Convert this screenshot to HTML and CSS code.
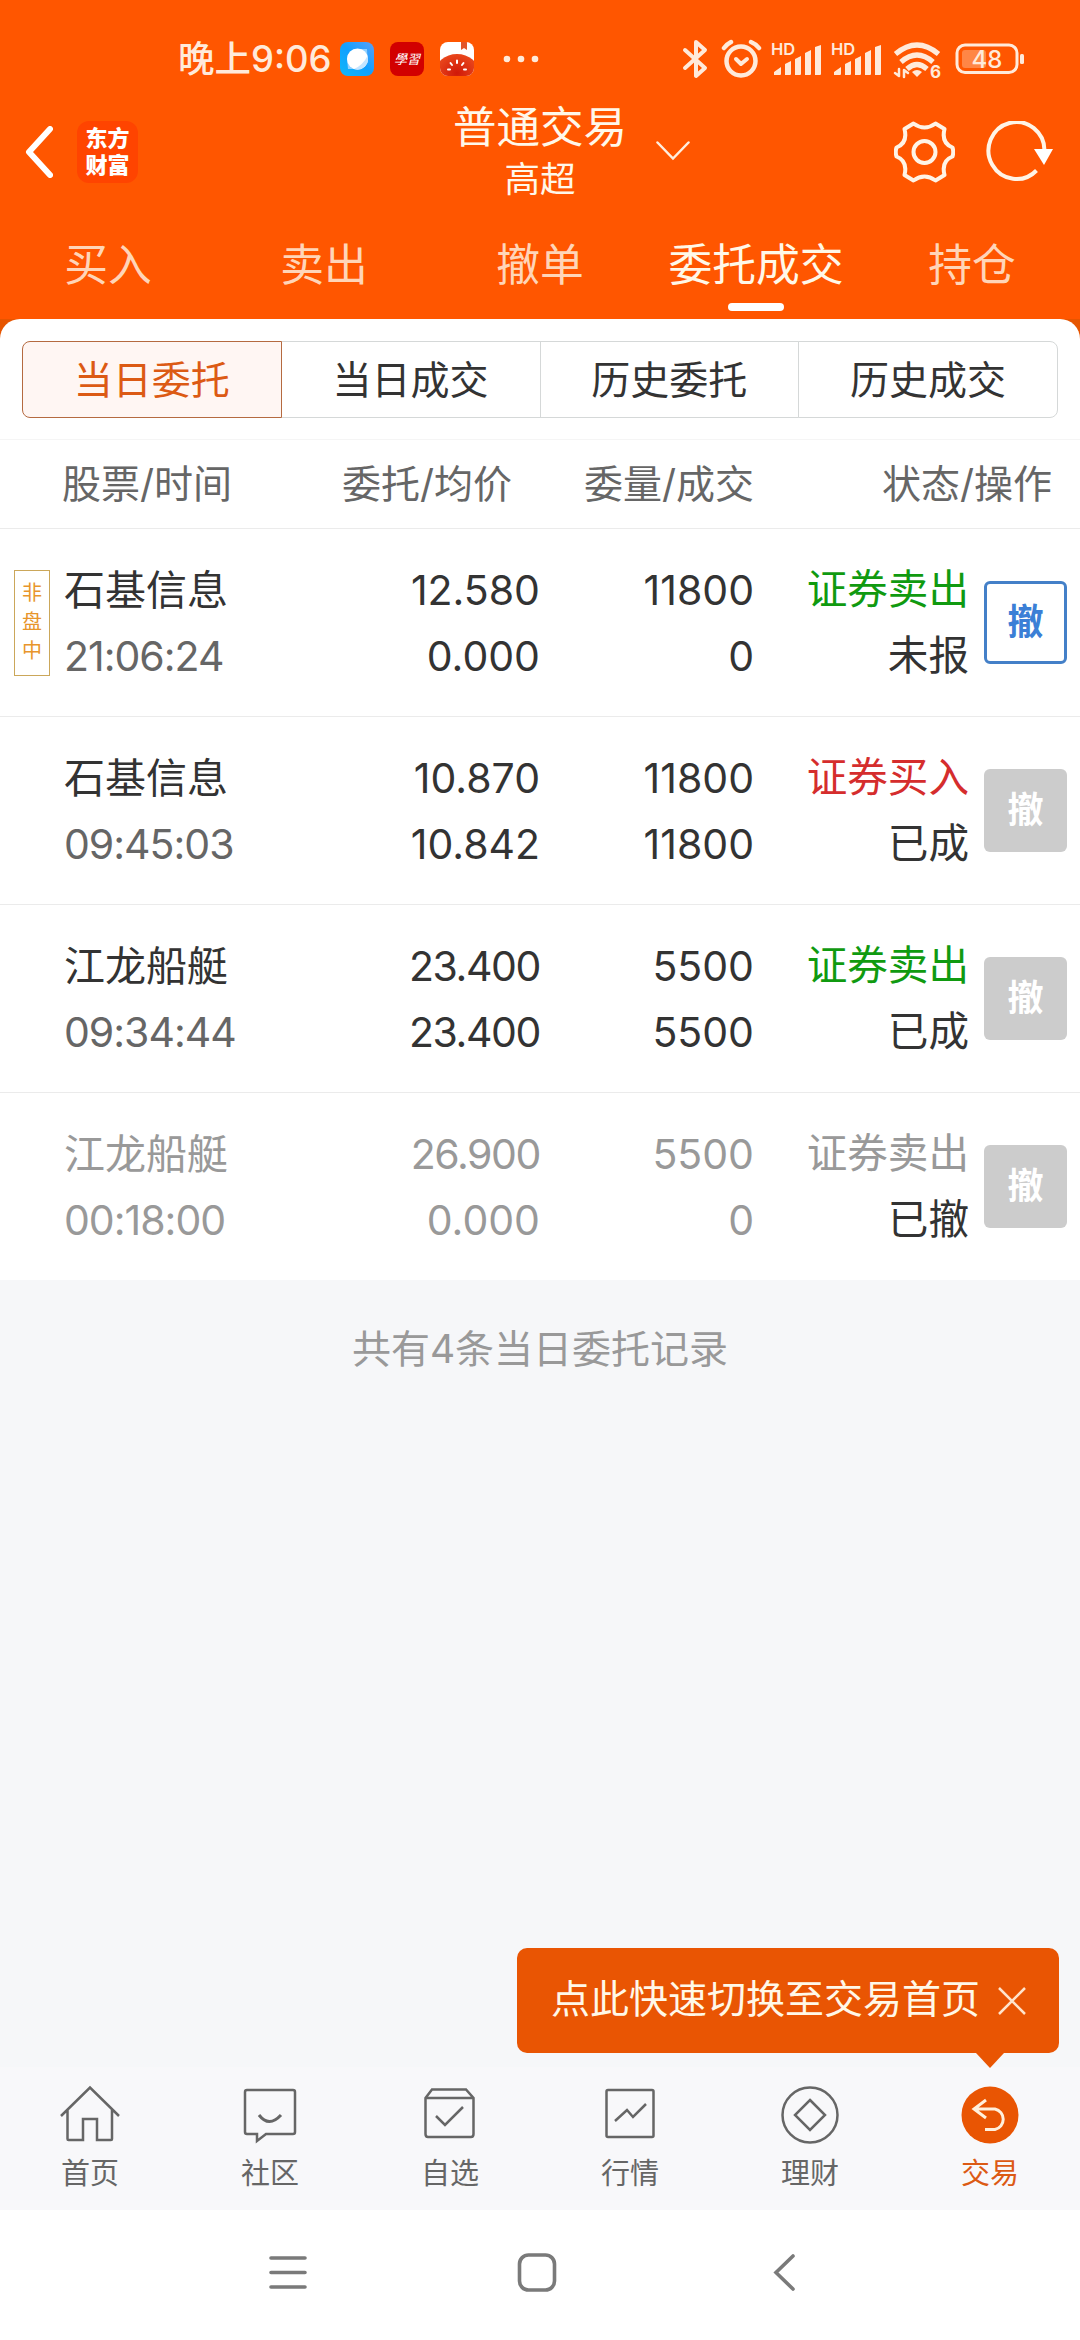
FILE: index.html
```
<!DOCTYPE html>
<html lang="zh-CN">
<head>
  <meta charset="UTF-8">
  <meta name="viewport" content="width=device-width, initial-scale=1.0">
  <title>普通交易</title>
  <link rel="stylesheet" href="styles.css">
</head>
<body>
  <div class="app">
    <header class="top">
      <div class="status-bar">
        <div class="status-left">
          <span class="clock">晚上9:06</span>
          <svg class="app-icon" viewBox="0 0 34 34">
            <defs>
              <linearGradient id="blue" x1="0" y1="1" x2="1" y2="0">
                <stop offset="0" stop-color="#10b8f8"/>
                <stop offset="0.5" stop-color="#10a0ff"/>
                <stop offset="1" stop-color="#5aa0f8"/>
              </linearGradient>
            </defs>
            <rect width="34" height="34" rx="8" fill="url(#blue)"/>
            <path d="M8 27 L7 17 A10 10 0 0 1 17 7 L27 7 L27.500 17 A10 10 0 0 1 17 27 Z" fill="#8fd0ff"/>
            <circle cx="17.500" cy="17" r="10.500" fill="#fff"/>
            <path d="M27.500 14 Q23 23 14 27 A10.500 10.500 0 0 0 27.500 14Z" fill="#c4e4ff"/>
          </svg>
          <span class="app-icon study">學習</span>
          <svg class="app-icon" viewBox="0 0 34 34">
            <defs>
              <clipPath id="round"><rect width="34" height="34" rx="8"/></clipPath>
              <radialGradient id="tomato" cx="0.5" cy="0.5" r="0.6">
                <stop offset="0" stop-color="#d01808"/>
                <stop offset="1" stop-color="#ee5020"/>
              </radialGradient>
            </defs>
            <g clip-path="url(#round)">
              <rect width="34" height="34" fill="#fff"/>
              <path d="M21 0h6v8l-3-2-3 2z" fill="#e2562a"/>
              <ellipse cx="17" cy="31" rx="22" ry="19" fill="url(#tomato)"/>
              <path d="M17 18.500v2.500M10.500 21l1.500 2M23.500 21l-1.500 2M8 27.500h2M24 27.500h2" stroke="#fff" stroke-width="2" stroke-linecap="round"/>
            </g>
          </svg>
          <svg class="dots" viewBox="0 0 36 8">
            <circle cx="4" cy="4" r="3.300"/><circle cx="18" cy="4" r="3.300"/><circle cx="32" cy="4" r="3.300"/>
          </svg>
        </div>
        <svg class="status-icons" viewBox="0 0 344 40">
          <path d="M3 11 L23 29 L14 37 V3 L23 11 L3 29" class="line" stroke-width="4"/>
          <g class="line">
            <circle cx="59" cy="22" r="14.500" stroke-width="4.500"/>
            <path d="M54 20l5 5 6-5" stroke-width="4"/>
            <path d="M42 9q3-4 7-6M69 3q5 2 8 6" stroke-width="4.500"/>
          </g>
          <text x="89" y="16" class="hd">HD</text>
          <path d="M92 36v-3l7-5v7q0 1-1 1zM103 36V25l6-3v13q0 1-1 1zM113 36V20l6-3v18q0 1-1 1zM123 36V14l6-3v24q0 1-1 1zM133 36V8l6-2v29q0 1-1 1z" class="solid"/>
          <text x="149" y="16" class="hd">HD</text>
          <path d="M152 36v-3l7-5v7q0 1-1 1zM163 36V25l6-3v13q0 1-1 1zM173 36V20l6-3v18q0 1-1 1zM183 36V14l6-3v24q0 1-1 1zM193 36V8l6-2v29q0 1-1 1z" class="solid"/>
          <g class="line butt" stroke-width="5.200">
            <path d="M213.500 15q21.500-18 43 0M219 23q16-14 32 0M225 30q10-9 20 0"/>
          </g>
          <path d="M230 33q5-4 10 0l-5 5z" class="solid"/>
          <path d="M213 34l4 3V30M222 38V31l4 3" class="line" stroke-width="2.500"/>
          <text x="248" y="39" class="six">6</text>
          <rect x="275" y="6" width="60" height="27.500" rx="8" class="line" stroke-width="3"/>
          <rect x="280" y="11" width="24" height="18" rx="3" fill="#ff8646"/>
          <text x="305" y="28.500" class="battery">48</text>
          <rect x="338" y="15" width="4" height="10" rx="1.500" class="solid"/>
        </svg>
      </div>

      <div class="title-bar">
        <div class="title-left">
          <svg class="back" viewBox="0 0 28 52"><path d="M25 3 L4 26 L25 49"/></svg>
          <div class="brand"><span>东方</span><span>财富</span></div>
        </div>
        <div class="title-center">
          <h1>普通交易</h1>
          <p>高超</p>
          <svg class="chevron" viewBox="0 0 34 20"><path d="M1.500 1.500 L17 17.500 L32.500 1.500"/></svg>
        </div>
        <div class="title-right">
          <svg class="gear" viewBox="0 0 61 62">
            <path d="M19.500 2.500 Q30.500 10.500 41.500 2.500 L50.500 8 Q47 22 58.500 26.500 Q60 31 58.500 35.500 Q47 40 50.500 54 L41.500 59.500 Q30.500 51.500 19.500 59.500 L10.500 54 Q14 40 2.500 35.500 Q1 31 2.500 26.500 Q14 22 10.500 8 Z"/>
            <circle cx="30.500" cy="31" r="11"/>
          </svg>
          <svg class="refresh" viewBox="0 0 68 62">
            <path d="M59.500 30 A28 28.500 0 1 0 51.500 49.500" class="ring"/>
            <path d="M49 28h19l-9 16z" class="head"/>
          </svg>
        </div>
      </div>

      <nav class="tabs">
        <a class="tab">买入</a>
        <a class="tab">卖出</a>
        <a class="tab">撤单</a>
        <a class="tab active">委托成交</a>
        <a class="tab">持仓</a>
      </nav>
    </header>

    <div class="sheet-wrap">
      <main class="sheet">
        <div class="segments">
          <button class="segment selected">当日委托</button>
          <button class="segment">当日成交</button>
          <button class="segment">历史委托</button>
          <button class="segment">历史成交</button>
        </div>

        <div class="columns">
          <span class="col-name">股票/时间</span>
          <span>委托/均价</span>
          <span>委量/成交</span>
          <span>状态/操作</span>
        </div>

        <div class="order">
          <div class="mark"><span class="badge">非盘中</span></div>
          <div class="name"><p>石基信息</p><p class="time">21:06:24</p></div>
          <div class="num"><p>12.580</p><p>0.000</p></div>
          <div class="num"><p>11800</p><p>0</p></div>
          <div class="state"><p class="sell">证券卖出</p><p>未报</p></div>
          <button class="cancel enabled">撤</button>
        </div>
        <div class="order">
          <div class="mark"></div>
          <div class="name"><p>石基信息</p><p class="time">09:45:03</p></div>
          <div class="num"><p>10.870</p><p>10.842</p></div>
          <div class="num"><p>11800</p><p>11800</p></div>
          <div class="state"><p class="buy">证券买入</p><p>已成</p></div>
          <button class="cancel">撤</button>
        </div>
        <div class="order">
          <div class="mark"></div>
          <div class="name"><p>江龙船艇</p><p class="time">09:34:44</p></div>
          <div class="num tight"><p>23.400</p><p>23.400</p></div>
          <div class="num"><p>5500</p><p>5500</p></div>
          <div class="state"><p class="sell">证券卖出</p><p>已成</p></div>
          <button class="cancel">撤</button>
        </div>
        <div class="order revoked">
          <div class="mark"></div>
          <div class="name"><p>江龙船艇</p><p class="time">00:18:00</p></div>
          <div class="num"><p class="tight">26.900</p><p>0.000</p></div>
          <div class="num"><p>5500</p><p>0</p></div>
          <div class="state"><p class="sell">证券卖出</p><p>已撤</p></div>
          <button class="cancel">撤</button>
        </div>
      </main>
    </div>

    <p class="summary">共有4条当日委托记录</p>

    <footer class="bottom-nav">
      <div class="tip">
        <span>点此快速切换至交易首页</span>
        <svg viewBox="0 0 30 30"><path d="M2 2 L28 28 M28 2 L2 28"/></svg>
      </div>
      <a class="nav-item">
        <svg viewBox="0 0 64 64"><path d="M3 33 L32 4.500 L61 33 M9.500 27 V56 Q9.500 57 10.500 57 H25 V36 H39 V57 H53 Q54 57 54 56 V27"/></svg>
        首页
      </a>
      <a class="nav-item">
        <svg viewBox="0 0 64 64"><path d="M9.500 7 H55 Q57 7 57 9 V49 Q57 51 55 51 H28 L19 58 V51 H9 Q7 51 7 49 V9 Q7 7 9 7 Z"/><path d="M21 32 Q31 45 43 32" stroke-width="3"/></svg>
        社区
      </a>
      <a class="nav-item">
        <svg viewBox="0 0 64 64"><path d="M7.500 15 L14 6.500 H48 L55.500 15 V51 Q55.500 54 53 54 H10 Q7.500 54 7.500 51 Z M7.500 15 H55.500 M18 33 L27 42 L45 24"/></svg>
        自选
      </a>
      <a class="nav-item">
        <svg viewBox="0 0 64 64"><rect x="8.500" y="7" width="47" height="47" rx="1.500"/><path d="M17 38 L29 27 L35 34 L48 21"/></svg>
        行情
      </a>
      <a class="nav-item">
        <svg viewBox="0 0 64 64"><circle cx="32" cy="32" r="27.500"/><path d="M32 17 L47 32 L32 47 L17 32 Z"/></svg>
        理财
      </a>
      <a class="nav-item current">
        <svg viewBox="0 0 64 64"><circle cx="32" cy="32" r="28.500" class="disc"/><path d="M28 17 L16 26 L28 35 M17 26 H37 A10.500 10.500 0 0 1 37 46.500 H27"/></svg>
        交易
      </a>
    </footer>

    <div class="system-nav">
      <svg viewBox="0 0 40 40"><path d="M3 6 H37 M3 20.500 H37 M3 35 H37"/></svg>
      <svg viewBox="0 0 40 40"><rect x="2.500" y="3" width="35" height="35" rx="9"/></svg>
      <svg viewBox="0 0 40 40"><path d="M27 4 L10 20.500 L27 37"/></svg>
    </div>
  </div>
</body>
</html>
```
FILE: styles.css
```
* {
  box-sizing: border-box;
}

body {
  margin: 0;
  background-color: #f6f7f9;
  color: #333;
  font-family: Inter, "Noto Sans CJK SC", sans-serif;
}

h1, p {
  margin: 0;
  font-weight: 400;
}

button {
  margin: 0;
  padding: 0;
  font-family: inherit;
}

svg {
  display: block;
  fill: none;
  flex: none;
}

.app {
  display: flex;
  flex-direction: column;
  width: 1080px;
  height: 2340px;
}

.top {
  height: 319px;
  background-color: #ff5600;
  color: #fff8ea;
}

/* status bar */
.status-bar {
  display: flex;
  justify-content: space-between;
  align-items: center;
  height: 104px;
  padding: 14px 54px 0 178px;
}

.status-left {
  display: flex;
  align-items: center;
}

.clock {
  width: 162px;
  color: #ffeada;
  font-size: 36.500px;
  font-weight: 500;
  line-height: 40px;
  white-space: nowrap;
}

.app-icon {
  width: 34px;
  height: 34px;
  margin-right: 16px;
}

.study {
  border-radius: 8px;
  background-color: #d20000;
  color: #fff;
  font-family: "Noto Sans CJK SC", sans-serif;
  font-size: 13px;
  font-style: italic;
  line-height: 34px;
  text-align: center;
}

.dots {
  width: 36px;
  height: 8px;
  margin-left: 13px;
  fill: #ffeada;
}

.status-icons {
  width: 344px;
  height: 40px;
}

.line {
  fill: none;
  stroke: #ffeada;
  stroke-linecap: round;
  stroke-linejoin: round;
}

.butt {
  stroke-linecap: butt;
}

.solid {
  fill: #ffeada;
}

.hd {
  fill: #ffeada;
  font-size: 16.500px;
  font-weight: 600;
}

.six {
  fill: #ffeada;
  font-size: 17px;
  font-weight: 700;
}

.battery {
  fill: #ffeada;
  font-size: 24px;
  font-weight: 500;
  text-anchor: middle;
}

/* title bar */
.title-bar {
  display: flex;
  justify-content: space-between;
  height: 108px;
}

.title-left {
  display: flex;
  align-items: center;
  width: 200px;
  height: 96px;
  padding-left: 25px;
}

.back {
  width: 28px;
  height: 52px;
  margin-right: 24px;
  stroke: #fff;
  stroke-width: 6;
  stroke-linecap: round;
  stroke-linejoin: round;
}

.brand {
  display: flex;
  flex-direction: column;
  justify-content: center;
  width: 61px;
  height: 62px;
  border-radius: 12px;
  background-color: #ff4400;
  color: #fff;
  font-size: 22px;
  font-weight: 900;
  line-height: 27px;
  text-align: center;
}

.title-center {
  position: relative;
  text-align: center;
}

.title-center h1 {
  font-size: 43.500px;
  line-height: 47px;
}

.title-center p {
  font-size: 35.500px;
  line-height: 58px;
}

.chevron {
  position: absolute;
  top: 37px;
  left: 203px;
  width: 34px;
  height: 20px;
  stroke: #ffeede;
  stroke-width: 2.500;
  stroke-linecap: round;
}

.title-right {
  display: flex;
  justify-content: flex-end;
  gap: 30px;
  width: 200px;
  padding: 17px 27px 0 0;
}

.gear {
  width: 61px;
  height: 62px;
  stroke: #fff4e6;
  stroke-width: 4;
  stroke-linejoin: round;
}

.refresh {
  width: 68px;
  height: 62px;
}

.ring {
  stroke: #fff4e6;
  stroke-width: 4;
}

.head {
  fill: #fff;
}

/* page tabs */
.tabs {
  display: flex;
  height: 107px;
}

.tab {
  display: flex;
  flex-direction: column;
  align-items: center;
  flex: 1;
  padding-top: 22px;
  color: #ffd5b8;
  font-size: 43.800px;
  line-height: 64px;
}

.tab.active {
  color: #fff8e8;
}

.tab.active::after {
  content: "";
  width: 56px;
  height: 8px;
  margin-top: 5px;
  border-radius: 4px;
  background-color: #fff;
}

/* order list */
.sheet-wrap {
  background-color: #e65500;
}

.sheet {
  border-radius: 20px 20px 0 0;
  background-color: #fff;
}

.segments {
  display: flex;
  height: 121px;
  padding: 22px 22px;
  border-bottom: 1px solid #f5f5f5;
}

.segment {
  flex: 1;
  height: 77px;
  margin-right: -1px;
  border: 1px solid #d5d8d8;
  background-color: #fff;
  color: #333;
  font-size: 39px;
  line-height: 73px;
}

.segment:first-child {
  border-radius: 8px 0 0 8px;
}

.segment:last-child {
  margin-right: 0;
  border-radius: 0 8px 8px 0;
}

.segment.selected {
  z-index: 1;
  border-color: #b56a40;
  background-color: #fff6f3;
  color: #dc5a14;
}

.columns {
  display: grid;
  grid-template-columns: 298px 214px 242px 298px;
  height: 89px;
  border-bottom: 1px solid #ebebeb;
  color: #666;
  font-size: 39px;
  line-height: 88px;
  text-align: right;
}

.col-name {
  padding-left: 62px;
  text-align: left;
}

.order {
  display: grid;
  grid-template-columns: 64px 236px 240px 214px 215px 83px;
  height: 188px;
  padding-top: 28px;
  border-bottom: 1px solid #ebebeb;
  font-size: 41px;
  line-height: 66px;
  text-align: right;
  white-space: nowrap;
}

.order:last-child {
  height: 187px;
  border-bottom: none;
}

.mark {
  padding: 13px 0 0 14px;
}

.badge {
  display: block;
  width: 36px;
  height: 106px;
  padding: 8px 7px;
  border: 1px solid #cba75a;
  color: #e8952c;
  font-size: 20px;
  line-height: 29px;
  text-align: center;
  white-space: normal;
}

.name {
  text-align: left;
}

.time {
  color: #666;
  letter-spacing: -1px;
}

.tight {
  letter-spacing: -1.400px;
}

.state {
  font-size: 40.600px;
}

.sell {
  color: #109a10;
}

.buy {
  color: #d52d2d;
}

.cancel {
  width: 83px;
  height: 83px;
  margin: 24px 0 0 15px;
  border: none;
  border-radius: 6px;
  background-color: #ccc;
  color: #fff;
  font-size: 36px;
  font-weight: 600;
  line-height: 77px;
}

.cancel.enabled {
  border: 3px solid #4480c8;
  background-color: #fff;
  color: #3b7fd6;
  line-height: 71px;
}

.revoked .name,
.revoked .num,
.revoked .time,
.revoked .sell {
  color: #999;
}

.summary {
  flex: 1;
  padding-top: 39px;
  color: #999;
  font-size: 39px;
  line-height: 60px;
  text-align: center;
}

/* bottom navigation */
.bottom-nav {
  position: relative;
  display: flex;
  height: 143px;
  background-color: #f8f8fa;
}

.nav-item {
  display: flex;
  flex-direction: column;
  align-items: center;
  flex: 1;
  padding-top: 16px;
  color: #666;
  font-size: 29px;
  line-height: 54px;
}

.nav-item svg {
  width: 64px;
  height: 64px;
  stroke: #666;
  stroke-width: 2.500;
}

.nav-item.current {
  color: #dc5a14;
}

.nav-item.current svg {
  stroke: #fff0dc;
  stroke-width: 3;
}

.disc {
  fill: #e95503;
  stroke: none;
}

.tip {
  position: absolute;
  right: 21px;
  bottom: 157px;
  display: flex;
  justify-content: space-between;
  align-items: center;
  width: 542px;
  height: 105px;
  padding: 0 32px 0 34px;
  border-radius: 10px;
  background-color: #e95503;
  color: #fff8e8;
  font-size: 39px;
  line-height: 60px;
  white-space: nowrap;
}

.tip span {
  padding-bottom: 4px;
}

.tip::after {
  content: "";
  position: absolute;
  top: 105px;
  right: 55px;
  border: 14px solid transparent;
  border-top: 15px solid #e95503;
  border-bottom: 0;
}

.tip svg {
  width: 30px;
  height: 30px;
  stroke: #ffe4cc;
  stroke-width: 2.500;
}

.system-nav {
  display: flex;
  justify-content: center;
  gap: 209px;
  height: 130px;
  padding: 42px 6px 0 0;
  background-color: #fff;
}

.system-nav svg {
  width: 40px;
  height: 40px;
  stroke: #7a7a7a;
  stroke-width: 3.600;
  stroke-linecap: round;
}
```
